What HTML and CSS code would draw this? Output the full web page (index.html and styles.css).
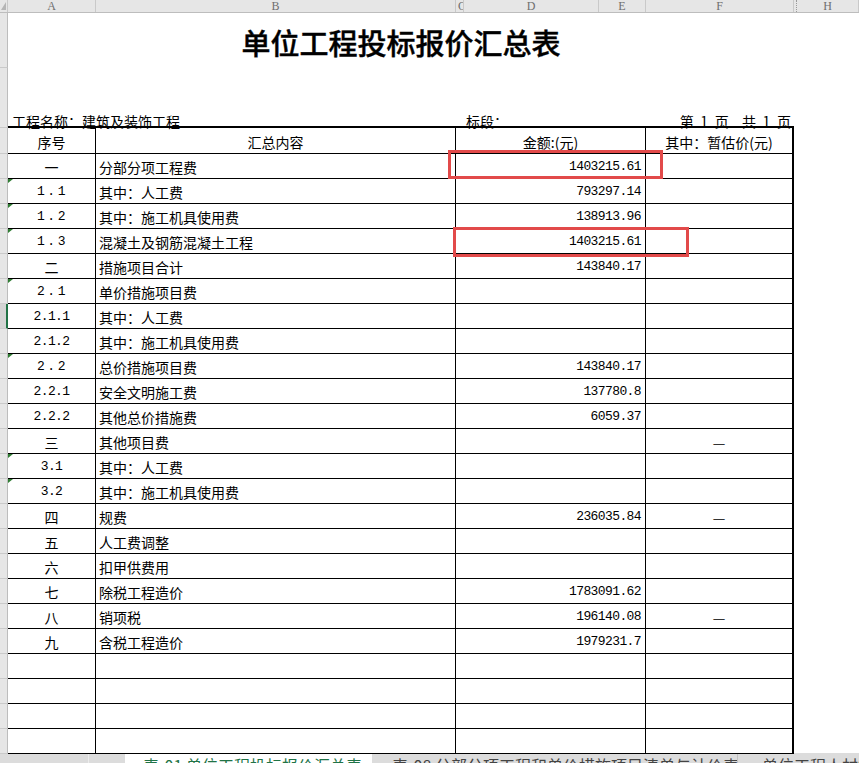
FILE: index.html
```html
<!DOCTYPE html>
<html lang="zh-CN">
<head>
<meta charset="utf-8">
<title>单位工程投标报价汇总表</title>
<link rel="stylesheet" href="styles.css">
</head>
<body>
<div class="app">
  <div class="colhdr">
    <div class="ch corner"><span class="sel"></span></div>
    <div class="ch w-a">A</div>
    <div class="ch w-b">B</div>
    <div class="ch w-c">C</div>
    <div class="ch w-d">D</div>
    <div class="ch w-e">E</div>
    <div class="ch w-f">F</div>
    <div class="ch w-g"></div>
    <div class="ch w-h">H</div>
    <div class="ch w-i"></div>
  </div>

  <div class="sheet">
    <div class="rowhdr">
      <div class="rh t1"></div>
      <div class="rh t2"></div>
      <div class="rh hd"></div>
      <div class="rh"></div><div class="rh"></div><div class="rh"></div><div class="rh"></div>
      <div class="rh"></div><div class="rh"></div><div class="rh active"></div><div class="rh"></div>
      <div class="rh"></div><div class="rh"></div><div class="rh"></div><div class="rh"></div>
      <div class="rh"></div><div class="rh"></div><div class="rh"></div><div class="rh"></div>
      <div class="rh"></div><div class="rh"></div><div class="rh"></div><div class="rh"></div>
      <div class="rh"></div><div class="rh"></div><div class="rh"></div><div class="rh"></div>
    </div>

    <div class="content">
      <div class="title">单位工程投标报价汇总表</div>
      <div class="info">
        <div class="i-name">工程名称：建筑及装饰工程</div>
        <div class="i-sec">标段：</div>
        <div class="i-page">第 1 页  共 1 页</div>
      </div>

      <div class="tbl">
        <div class="cell h c">序号</div>
        <div class="cell h c">汇总内容</div>
        <div class="cell h c">金额:(元)</div>
        <div class="cell h c last">其中：暂估价(元)</div>

        <div class="cell c">一</div><div class="cell t">分部分项工程费</div><div class="cell n">1403215.61</div><div class="cell last"></div>
        <div class="cell c m w tri">1.1</div><div class="cell t">其中：人工费</div><div class="cell n">793297.14</div><div class="cell last"></div>
        <div class="cell c m w tri">1.2</div><div class="cell t">其中：施工机具使用费</div><div class="cell n">138913.96</div><div class="cell last"></div>
        <div class="cell c m w tri">1.3</div><div class="cell t">混凝土及钢筋混凝土工程</div><div class="cell n">1403215.61</div><div class="cell last"></div>
        <div class="cell c">二</div><div class="cell t">措施项目合计</div><div class="cell n">143840.17</div><div class="cell last"></div>
        <div class="cell c m w tri">2.1</div><div class="cell t">单价措施项目费</div><div class="cell n"></div><div class="cell last"></div>
        <div class="cell c m">2.1.1</div><div class="cell t">其中：人工费</div><div class="cell n"></div><div class="cell last"></div>
        <div class="cell c m">2.1.2</div><div class="cell t">其中：施工机具使用费</div><div class="cell n"></div><div class="cell last"></div>
        <div class="cell c m w tri">2.2</div><div class="cell t">总价措施项目费</div><div class="cell n">143840.17</div><div class="cell last"></div>
        <div class="cell c m">2.2.1</div><div class="cell t">安全文明施工费</div><div class="cell n">137780.8</div><div class="cell last"></div>
        <div class="cell c m">2.2.2</div><div class="cell t">其他总价措施费</div><div class="cell n">6059.37</div><div class="cell last"></div>
        <div class="cell c">三</div><div class="cell t">其他项目费</div><div class="cell n"></div><div class="cell last c dash">—</div>
        <div class="cell c m tri">3.1</div><div class="cell t">其中：人工费</div><div class="cell n"></div><div class="cell last"></div>
        <div class="cell c m tri">3.2</div><div class="cell t">其中：施工机具使用费</div><div class="cell n"></div><div class="cell last"></div>
        <div class="cell c">四</div><div class="cell t">规费</div><div class="cell n">236035.84</div><div class="cell last c dash">—</div>
        <div class="cell c">五</div><div class="cell t">人工费调整</div><div class="cell n"></div><div class="cell last"></div>
        <div class="cell c">六</div><div class="cell t">扣甲供费用</div><div class="cell n"></div><div class="cell last"></div>
        <div class="cell c">七</div><div class="cell t">除税工程造价</div><div class="cell n">1783091.62</div><div class="cell last"></div>
        <div class="cell c">八</div><div class="cell t">销项税</div><div class="cell n">196140.08</div><div class="cell last c dash">—</div>
        <div class="cell c">九</div><div class="cell t">含税工程造价</div><div class="cell n">1979231.7</div><div class="cell last"></div>

        <div class="cell"></div><div class="cell"></div><div class="cell"></div><div class="cell last"></div>
        <div class="cell"></div><div class="cell"></div><div class="cell"></div><div class="cell last"></div>
        <div class="cell"></div><div class="cell"></div><div class="cell"></div><div class="cell last"></div>
        <div class="cell"></div><div class="cell"></div><div class="cell"></div><div class="cell last"></div>
      </div>
    </div>
  </div>

  <div class="tabs">
    <div class="tnav"><span class="tnav-a"></span><span class="tnav-b"></span></div>
    <div class="tab active">表-01 单位工程投标报价汇总表</div>
    <div class="tab t2">表-08 分部分项工程和单价措施项目清单与计价表</div>
    <div class="tab t3">单位工程人材机汇总表</div>
  </div>

  <div class="mark m1"></div>
  <div class="mark m2"></div>
</div>
</body>
</html>
```

FILE: styles.css
```css
html, body {
  margin: 0;
  padding: 0;
  background: #fff;
}

.app {
  position: relative;
  width: 859px;
  height: 763px;
  overflow: hidden;
  background: #fff;
  font-family: "Noto Sans CJK SC", sans-serif;
  color: #000;
}

/* column header */
.colhdr {
  display: flex;
  height: 13px;
  background: #e6e6e6;
  border-bottom: 1px solid #bdbdbd;
  box-sizing: border-box;
}
.ch {
  flex: none;
  box-sizing: border-box;
  height: 12px;
  border-right: 1px solid #c9c9c9;
  text-align: center;
  font: 12px/12px "Liberation Serif", serif;
  color: #6e6e6e;
  overflow: hidden;
}
.corner { width: 8px; position: relative; }
.sel {
  position: absolute;
  left: 1px;
  top: 2px;
  width: 0;
  height: 0;
  border-style: solid;
  border-width: 0 0 8px 5px;
  border-color: transparent transparent #b5b5b5 transparent;
}
.w-a { width: 88px; }
.w-b { width: 360px; }
.w-c { width: 8px; text-indent: 2px; }
.w-d { width: 135px; }
.w-e { width: 47px; }
.w-f { width: 148px; }
.w-g { width: 3px; border-right: 1px dotted #9a9a9a; }
.w-h { width: 62px; }
.w-i { flex: 1; border-right: none; }

/* sheet */
.sheet {
  display: flex;
  height: 740px;
}
.rowhdr {
  flex: none;
  width: 8px;
  display: flex;
  flex-direction: column;
  background: #e6e6e6;
}
.rh {
  flex: none;
  box-sizing: border-box;
  height: 25px;
  border-bottom: 1px solid #cacaca;
  border-right: 1px solid #bdbdbd;
}
.rh.t1 { height: 55px; }
.rh.t2 { height: 60px; }
.rh.hd { height: 26px; }
.rh.active {
  background: #d4d4d4;
  border-right: 2px solid #217346;
}

.content {
  flex: 1;
}

.title {
  box-sizing: border-box;
  width: 786px;
  height: 100px;
  padding-top: 12px;
  text-align: center;
  font-size: 29px;
  line-height: 35px;
  font-weight: 500;
  -webkit-text-stroke: 0.4px #000;
}

.info {
  display: grid;
  grid-template-columns: 448px 190px 148px;
  height: 13px;
  font-size: 14px;
  line-height: 16px;
  white-space: nowrap;
}
.i-name { padding-left: 4px; }
.i-sec { padding-left: 10px; }
.i-page {
  text-align: right;
  padding-right: 3px;
  white-space: pre;
  word-spacing: 3.5px;
}

.tbl {
  position: relative;
  display: grid;
  grid-template-columns: 88px 360px 190px 148px;
  width: 786px;
  border-top: 2px solid #000;
  background: transparent;
}
.cell {
  position: relative;
  box-sizing: border-box;
  height: 25px;
  padding-top: 2px;
  border-right: 1px solid #000;
  border-bottom: 1px solid #000;
  font-size: 14px;
  line-height: 22px;
  white-space: nowrap;
  overflow: visible;
}
.cell.h {
  height: 26px;
  padding-top: 3px;
}
.cell.last { border-right: 2px solid #000; }
.c { text-align: center; }
.t { padding-left: 3px; }
.n {
  text-align: right;
  padding-right: 4px;
  font-family: "Liberation Mono", monospace;
  font-size: 13px;
  letter-spacing: -0.6px;
}
.m {
  font-family: "Liberation Mono", monospace;
  font-size: 13px;
  letter-spacing: -0.6px;
}
.m.w { letter-spacing: 2.6px; text-indent: 2px; }
.dash { color: #333; }

.tri::before {
  content: "";
  position: absolute;
  left: 0;
  top: 0;
  width: 0;
  height: 0;
  border-style: solid;
  border-width: 4px 5px 0 0;
  border-color: #2f7d32 transparent transparent transparent;
}

/* red annotation boxes */
.mark {
  position: absolute;
  box-sizing: border-box;
  border: 3px solid #e24a4a;
}
.m1 { left: 448px; top: 150px; width: 215px; height: 29px; }
.m2 { left: 453px; top: 227px; width: 236px; height: 30px; }

/* sheet tabs */
.tabs {
  display: flex;
  height: 30px;
  background: #dcdcdc;
  font-size: 16px;
  line-height: 18px;
  white-space: nowrap;
}
.tnav {
  flex: none;
  width: 125px;
  display: flex;
}
.tnav-a {
  width: 88px;
  border-right: 1px solid #ececec;
}
.tab {
  flex: none;
  box-sizing: border-box;
  padding-top: 3px;
  overflow: hidden;
}
.tab.active {
  width: 247px;
  background: #fff;
  color: #217346;
  padding-left: 18px;
}
.tab.t2 {
  width: 366px;
  color: #444;
  padding-left: 20px;
  border-right: 1px solid #c2c2c2;
}
.tab.t3 {
  flex: 1;
  color: #444;
  padding-left: 24px;
}
```
